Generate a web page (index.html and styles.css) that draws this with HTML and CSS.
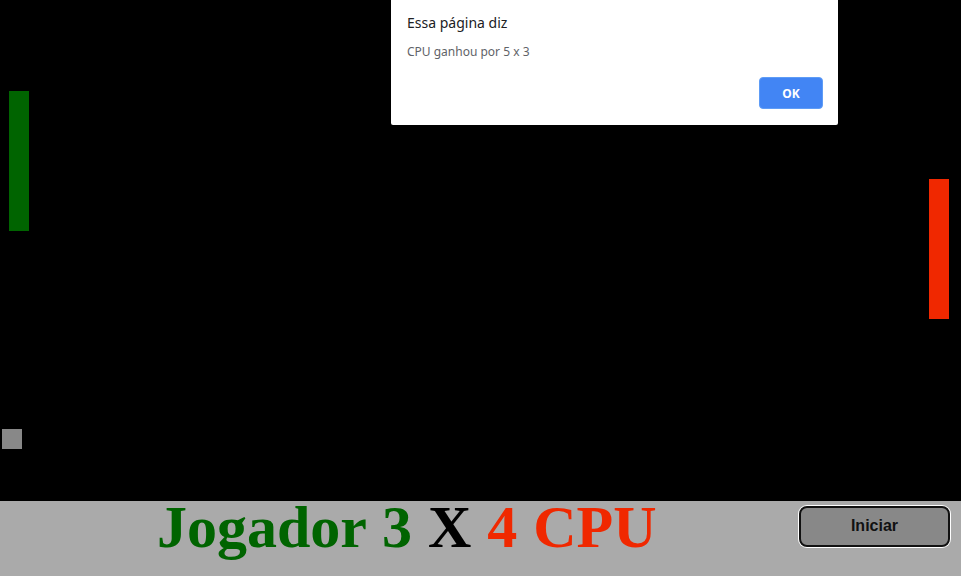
FILE: index.html
```html
<!DOCTYPE html>
<html lang="pt">
<head>
<meta charset="utf-8">
<title>Pong</title>
<link rel="stylesheet" href="styles.css">
</head>
<body>
<div class="game">
  <div class="paddle player"></div>
  <div class="paddle cpu"></div>
  <div class="ball"></div>
</div>
<div class="footer">
  <div class="score"><span class="p">Jogador 3</span> <span class="x">X</span> <span class="c">4 CPU</span></div>
  <button class="start">Iniciar</button>
</div>
<div class="dialog">
  <div class="title">Essa página diz</div>
  <div class="msg">CPU ganhou por 5 x 3</div>
  <div class="actions"><button class="ok">OK</button></div>
</div>
</body>
</html>
```
FILE: styles.css
```css
html, body {
  margin: 0;
  padding: 0;
  background: #000;
  width: 961px;
  height: 576px;
  overflow: hidden;
}
.game {
  position: relative;
  width: 961px;
  height: 501px;
  background: #000;
}
.paddle {
  position: absolute;
  width: 20px;
  height: 140px;
}
.player {
  left: 9px;
  top: 91px;
  background: #006400;
}
.cpu {
  left: 929px;
  top: 179px;
  background: #f02800;
}
.ball {
  position: absolute;
  left: 2px;
  top: 429px;
  width: 20px;
  height: 20px;
  background: #888;
}
.footer {
  height: 75px;
  background: #aaa;
  display: flex;
  justify-content: space-between;
  align-items: flex-start;
  padding: 0 11px 0 157px;
}
.score {
  font-family: "Liberation Serif", "Times New Roman", serif;
  font-weight: bold;
  font-size: 60px;
  line-height: 52px;
  white-space: nowrap;
  word-spacing: 1px;
}
.score .p { color: #006400; }
.score .x { color: #000; }
.score .c { color: #f02800; }
.start {
  margin-top: 5px;
  width: 151px;
  height: 41px;
  background: #888;
  border: 2px solid #111;
  border-radius: 8px;
  box-shadow: 0 0 0 1px #fff;
  font-family: "Liberation Sans", Arial, sans-serif;
  font-weight: bold;
  font-size: 16px;
  line-height: 16px;
  color: #111;
  padding: 0 0 2px 0;
}
.dialog {
  position: absolute;
  left: 391px;
  top: 0;
  width: 447px;
  height: 125px;
  box-sizing: border-box;
  background: #fff;
  border-radius: 0 0 2px 2px;
  box-shadow: 0 1px 4px rgba(0,0,0,0.3);
  padding: 13px 15px 16px 16px;
  font-family: "Noto Sans", "Open Sans", sans-serif;
  display: flex;
  flex-direction: column;
}
.title {
  font-size: 14px;
  line-height: 20px;
  color: #202124;
}
.msg {
  margin-top: 11px;
  font-size: 12px;
  line-height: 16px;
  color: #5f6368;
}
.actions {
  margin-top: auto;
  display: flex;
  justify-content: flex-end;
}
.ok {
  width: 64px;
  height: 32px;
  border: 1px solid #5e9cf6;
  border-radius: 4px;
  background: #4285f4;
  color: #fff;
  font-family: "Noto Sans", "Open Sans", sans-serif;
  font-weight: bold;
  font-size: 12px;
  padding: 0;
}
```
